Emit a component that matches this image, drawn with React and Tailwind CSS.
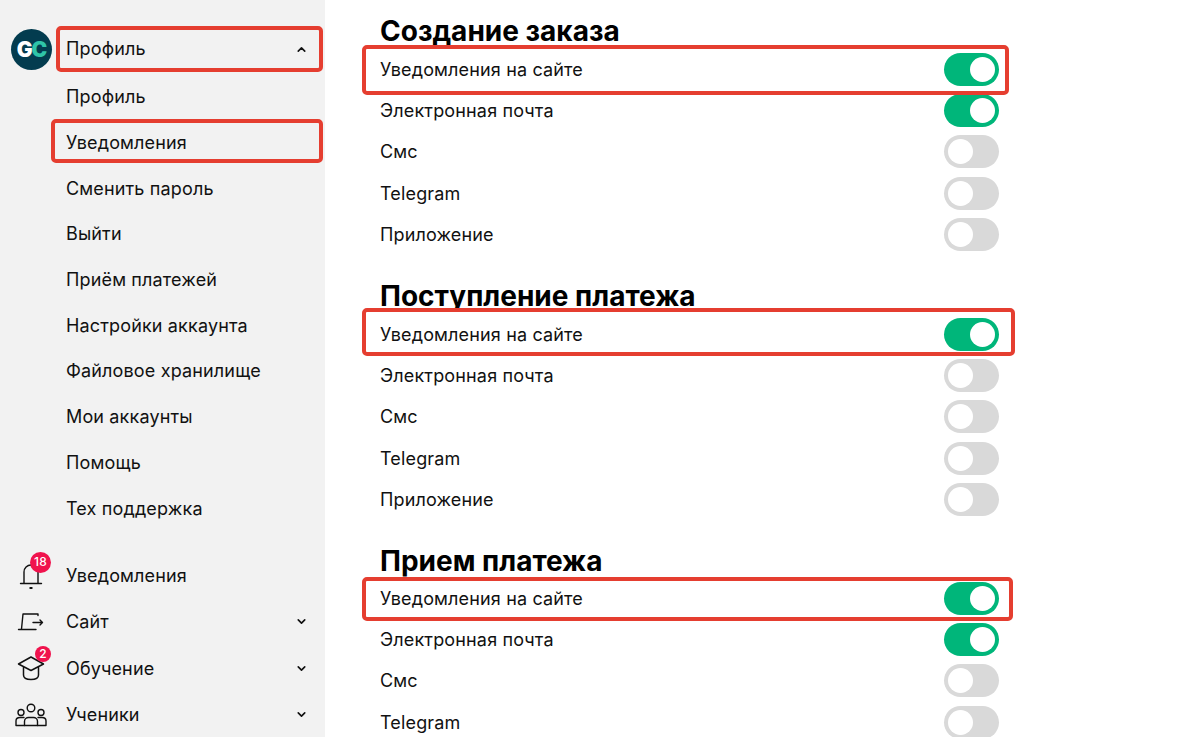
import React from 'react';
import { ChevronDown, ChevronUp } from 'lucide-react';

const FONT = "font-['Inter','Noto_Sans',sans-serif]";

const BellIcon = () => (
  <svg width="26" height="30" viewBox="0 0 26 30" fill="none" stroke="#111" strokeWidth="1.4" strokeLinecap="round">
    <path d="M6 22V11a7 7 0 0 1 14 0v11" />
    <path d="M2.5 22.5h21" />
    <path d="M12.2 27h1.6" strokeWidth="1.8" />
  </svg>
);

const SiteIcon = () => (
  <svg width="28" height="20" viewBox="0 0 28 20" fill="none" stroke="#111" strokeWidth="1.4" strokeLinecap="round" strokeLinejoin="round">
    <path d="M21 3.5V2H6L4.5 17" />
    <path d="M1.5 17.5H19" />
    <path d="M16 10.5h9.5M23 8l2.5 2.5-2.5 2.5" />
  </svg>
);

const CapIcon = () => (
  <svg width="28" height="26" viewBox="0 0 28 26" fill="none" stroke="#111" strokeWidth="1.5" strokeLinejoin="round" strokeLinecap="round">
    <path d="M14 2 1.5 9 14 15.5 26.5 9z" />
    <path d="M6.5 12.5V20c0 3 3.5 4.5 7.5 4.5s7.5-1.5 7.5-4.5v-7.5" />
  </svg>
);

const UsersIcon = () => (
  <svg width="32" height="24" viewBox="0 0 32 24" fill="none" stroke="#111" strokeWidth="1.4" strokeLinecap="round" strokeLinejoin="round">
    <circle cx="16" cy="5" r="3.8" />
    <circle cx="6" cy="9.5" r="3" />
    <circle cx="26" cy="9.5" r="3" />
    <path d="M9.5 22.5v-4c0-2.5 2-4 4-4h5c2 0 4 1.5 4 4v4z" />
    <path d="M9 14.5H5c-2.5 0-4 1.5-4 3.5v4.5h8.5" />
    <path d="M23 14.5h4c2.500 0 4 1.500 4 3.500v4.500h-8.500" />
  </svg>
);

const Badge = ({ children, className }) => (
  <span className={`absolute flex items-center justify-center rounded-full bg-[#f0134d] text-[12px] font-medium leading-none text-white ${className}`}>
    {children}
  </span>
);

const Toggle = ({ on }) => (
  <div className={`flex h-[33px] w-[55px] items-center rounded-full px-[4px] ${on ? 'justify-end bg-[#00b67a]' : 'justify-start bg-[#d9d9d9]'}`}>
    <div className="h-[25px] w-[25px] rounded-full bg-white" />
  </div>
);

const SubItem = ({ children }) => (
  <div className="flex h-[45.7px] items-center pl-[66px] text-[18px] tracking-[0.15px] text-[#111]">{children}</div>
);

const MenuItem = ({ icon, label, chevron, className = '' }) => (
  <div className={`flex items-center text-[18px] tracking-[0.15px] text-[#111] ${className}`}>
    <div className="relative flex w-[66px] shrink-0 justify-center pr-[4px]">{icon}</div>
    <span className="flex-1">{label}</span>
    {chevron && <ChevronDown className="mr-[17px] h-[13px] w-[13px]" strokeWidth={3} />}
  </div>
);

const Row = ({ label, on }) => (
  <div className="flex h-[41.2px] w-[619px] items-center justify-between text-[18px] tracking-[0.15px] text-[#111]">
    <span>{label}</span>
    <Toggle on={on} />
  </div>
);

const Section = ({ title, values, className, titleClass = 'pb-[1px]', boxClass }) => (
  <section className={`relative ${className}`}>
    <h2 className={`flex h-[44px] items-end text-[28px] font-bold leading-[34px] text-black ${titleClass}`}>{title}</h2>
    <Row label="Уведомления на сайте" on={values[0]} />
    <Row label="Электронная почта" on={values[1]} />
    <Row label="Смс" on={values[2]} />
    <Row label="Telegram" on={values[3]} />
    {values.length > 4 && <Row label="Приложение" on={values[4]} />}
    <div className={`absolute left-[-18px] rounded-[5px] border-[4px] border-[#e53e30] ${boxClass}`} />
  </section>
);

export default function App() {
  return (
    <div className={`flex h-[737px] w-[1200px] overflow-hidden bg-white ${FONT}`}>
      <aside className="relative h-full w-[325px] shrink-0 bg-[#f2f2f2]">
        <div className="h-[26px]" />
        <div className="mb-[2px] flex h-[46px] items-center text-[18px] tracking-[0.15px] text-[#111]">
          <div className="ml-[11px] flex h-[41px] w-[41px] items-center justify-center rounded-full bg-[#033c4f] text-[21px] font-black leading-none tracking-[-1px]">
            <span className="text-white">G</span>
            <span className="text-[#2fc4a8]">C</span>
          </div>
          <span className="ml-[14px] flex-1 pb-[2px]">Профиль</span>
          <ChevronUp className="mr-[17px] h-[13px] w-[13px]" strokeWidth={3} />
        </div>
        <SubItem>Профиль</SubItem>
        <SubItem>Уведомления</SubItem>
        <SubItem>Сменить пароль</SubItem>
        <SubItem>Выйти</SubItem>
        <SubItem>Приём платежей</SubItem>
        <SubItem>Настройки аккаунта</SubItem>
        <SubItem>Файловое хранилище</SubItem>
        <SubItem>Мои аккаунты</SubItem>
        <SubItem>Помощь</SubItem>
        <SubItem>Тех поддержка</SubItem>
        <div className="mt-[22px]">
          <MenuItem
            className="h-[46px]"
            label="Уведомления"
            icon={
              <>
                <BellIcon />
                <Badge className="left-[30px] top-[-9px] h-[21px] w-[21px]">18</Badge>
              </>
            }
          />
          <MenuItem className="h-[46px]" label="Сайт" chevron icon={<SiteIcon />} />
          <MenuItem
            className="h-[47px]"
            label="Обучение"
            chevron
            icon={
              <>
                <CapIcon />
                <Badge className="left-[35px] top-[-9px] h-[16px] w-[16px]">2</Badge>
              </>
            }
          />
          <MenuItem className="h-[46px]" label="Ученики" chevron icon={<UsersIcon />} />
        </div>
        <div className="absolute left-[56px] top-[26px] h-[46px] w-[267px] rounded-[5px] border-[4px] border-[#e53e30]" />
        <div className="absolute left-[51px] top-[119px] h-[44px] w-[272px] rounded-[5px] border-[4px] border-[#e53e30]" />
      </aside>
      <main className="flex-1 pl-[55px] pt-[5px]">
        <Section className="h-[265px]" title="Создание заказа" values={[true, true, false, false, false]} boxClass="top-[40px] h-[50px] w-[647px]" />
        <Section className="h-[264px]" title="Поступление платежа" values={[true, false, false, false, false]} boxClass="top-[38px] h-[48px] w-[653px]" />
        <Section className="h-[203px]" titleClass="" title="Прием платежа" values={[true, true, false, false]} boxClass="top-[43px] h-[44px] w-[651px]" />
      </main>
    </div>
  );
}
